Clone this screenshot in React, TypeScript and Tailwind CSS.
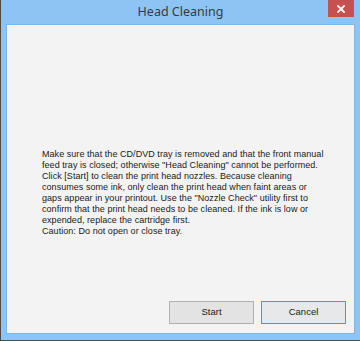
export default function App() {
  const lines = [
    'Make sure that the CD/DVD tray is removed and that the front manual',
    'feed tray is closed; otherwise "Head Cleaning" cannot be performed.',
    'Click [Start] to clean the print head nozzles. Because cleaning',
    'consumes some ink, only clean the print head when faint areas or',
    'gaps appear in your printout. Use the "Nozzle Check" utility first to',
    'confirm that the print head needs to be cleaned. If the ink is low or',
    'expended, replace the cartridge first.',
    'Caution: Do not open or close tray.',
  ];
  return (
    <div className="w-[360px] h-[341px] bg-[#8ec4f4] border-l border-b border-[#4a4a4a] flex flex-col" style={{ fontFamily: '"Liberation Sans", Arial, sans-serif' }}>
      {/* title bar */}
      <div className="relative h-[24px] flex items-center justify-center">
        <span className="text-[12.5px] text-[#3a3a3a] leading-none pt-[1px]" style={{ fontFamily: '"Noto Sans", "Open Sans", sans-serif' }}>Head Cleaning</span>
        <div className="absolute right-[6px] top-0 w-[26px] h-[17px] bg-[#c75050] flex items-center justify-center">
          <svg width="8" height="8" viewBox="0 0 8 8">
            <path d="M1 1 L7 7 M7 1 L1 7" stroke="#ffffff" strokeWidth="1.8" strokeLinecap="square" />
          </svg>
        </div>
      </div>
      {/* client area */}
      <div className="ml-[5px] mr-[5px] h-[310px] border border-[#7db6e8] bg-[#f3f3f3] flex flex-col">
        <div className="pl-[35px] pt-[124px] text-[9px] leading-[11px] tracking-[0.05px] text-[#1a1a1a]">
          {lines.map((l, i) => (
            <div key={i} className="whitespace-nowrap">{l}</div>
          ))}
        </div>
        <div className="mt-auto mb-[9px] mr-[8px] flex justify-end gap-[7px]">
          <button className="w-[85px] h-[23px] bg-[#e3e3e3] border border-[#b0b0b0] text-[9.5px] text-[#1a1a1a]">Start</button>
          <button className="w-[85px] h-[23px] bg-[#e6e8ea] border border-[#4a9ad8] text-[9.5px] text-[#1a1a1a]">Cancel</button>
        </div>
      </div>
    </div>
  );
}
